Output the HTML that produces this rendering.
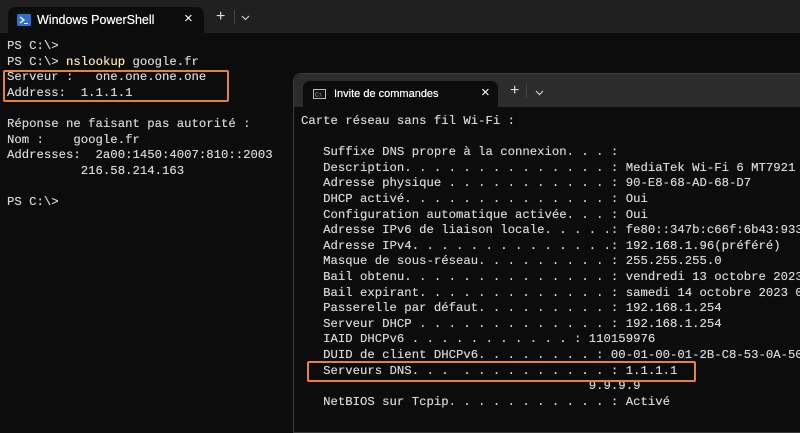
<!DOCTYPE html>
<html><head><meta charset="utf-8"><style>
*{margin:0;padding:0;box-sizing:border-box}
body{width:800px;height:421px;overflow:hidden;background:#0c0c0c;position:relative;font-family:"Liberation Mono",monospace;color:#d4d4d4}
.bar{position:absolute;left:0;top:0;width:800px;height:33px;background:#202020}
.tab{position:absolute;background:#0c0c0c;border-radius:7px 7px 0 0;font-family:"Liberation Sans",sans-serif;color:#fff;font-size:12px}
.t{position:absolute;white-space:pre;font-size:12.3px;line-height:15.6px;letter-spacing:0;text-shadow:0 0 0.4px #ddd}
.box{position:absolute;border:2.5px solid #e8823a;border-radius:2px}
.win{position:absolute;left:293px;top:73px;width:520px;height:360px;background:#0c0c0c;border:1px solid #3a3a3a;border-radius:8px 0 0 0}
.tb{position:absolute;left:0;top:0;width:100%;height:33px;background:#2c2c2c;border-radius:8px 0 0 0}
</style></head><body>
<div class="bar"></div>
<div class="tab" style="left:8px;top:7px;width:196px;height:27px">
 <svg style="position:absolute;left:9px;top:7px" width="14" height="12"><rect width="14" height="12" rx="1.5" fill="#2e6fcf"/><path d="M3 3l4 3-4 3" stroke="#fff" stroke-width="1.3" fill="none"/><path d="M7 9.5h4" stroke="#fff" stroke-width="1"/></svg>
 <span style="position:absolute;left:29px;top:6px;font-size:12.5px;text-shadow:0 0 0.5px #fff">Windows PowerShell</span>
 <span style="position:absolute;left:176px;top:3px;font-size:15px">×</span>
</div>
<div style="position:absolute;left:216px;top:8px;color:#ddd;font-family:'Liberation Sans';font-size:16px">+</div>
<div style="position:absolute;left:234px;top:10px;width:1px;height:14px;background:#444"></div>
<svg style="position:absolute;left:241px;top:15px" width="9" height="6"><path d="M1 1l3.5 3.5L8 1" stroke="#ccc" stroke-width="1.2" fill="none"/></svg>

<div class="t" style="left:7px;top:39px">PS C:\&gt;
PS C:\&gt; <span style="color:#f9f1a5">nslookup</span> google.fr
Serveur :   one.one.one.one
Address:  1.1.1.1

Réponse ne faisant pas autorité :
Nom :    google.fr
Addresses:  2a00:1450:4007:810::2003
          216.58.214.163

PS C:\&gt;</div>
<div class="box" style="left:3px;top:70px;width:226px;height:32px"></div>

<div class="win">
 <div class="tb"></div>
 <div class="tab" style="left:9px;top:7px;width:195px;height:27px">
  <svg style="position:absolute;left:10px;top:8px" width="13" height="10"><rect x=".5" y=".5" width="12" height="9" fill="#111" stroke="#bbb"/><text x="2" y="7.5" font-size="5" fill="#ccc" font-family="Liberation Sans">C:\</text></svg>
  <span style="position:absolute;left:31px;top:7px;font-size:11px;text-shadow:0 0 0.5px #fff">Invite de commandes</span>
  <span style="position:absolute;left:178px;top:3px;font-size:15px">×</span>
 </div>
 <div style="position:absolute;left:216px;top:8px;color:#ddd;font-family:'Liberation Sans';font-size:16px">+</div>
 <div style="position:absolute;left:232px;top:10px;width:1px;height:14px;background:#444"></div>
 <svg style="position:absolute;left:241px;top:16px" width="9" height="6"><path d="M1 1l3.5 3.5L8 1" stroke="#ccc" stroke-width="1.2" fill="none"/></svg>
</div>
<div class="t" style="left:301px;top:114px">Carte réseau sans fil Wi-Fi :

   Suffixe DNS propre à la connexion. . . :
   Description. . . . . . . . . . . . . . : MediaTek Wi-Fi 6 MT7921
   Adresse physique . . . . . . . . . . . : 90-E8-68-AD-68-D7
   DHCP activé. . . . . . . . . . . . . . : Oui
   Configuration automatique activée. . . : Oui
   Adresse IPv6 de liaison locale. . . . .: fe80::347b:c66f:6b43:933
   Adresse IPv4. . . . . . . . . . . . . .: 192.168.1.96(préféré)
   Masque de sous-réseau. . . . . . . . . : 255.255.255.0
   Bail obtenu. . . . . . . . . . . . . . : vendredi 13 octobre 2023
   Bail expirant. . . . . . . . . . . . . : samedi 14 octobre 2023 0
   Passerelle par défaut. . . . . . . . . : 192.168.1.254
   Serveur DHCP . . . . . . . . . . . . . : 192.168.1.254
   IAID DHCPv6 . . . . . . . . . . . : 110159976
   DUID de client DHCPv6. . . . . . . . : 00-01-00-01-2B-C8-53-0A-50
   Serveurs DNS. . .  . . . . . . . . . . : 1.1.1.1
                                       9.9.9.9
   NetBIOS sur Tcpip. . . . . . . . . . . : Activé</div>
<div class="box" style="left:307px;top:361px;width:389px;height:21px"></div>
</body></html>
